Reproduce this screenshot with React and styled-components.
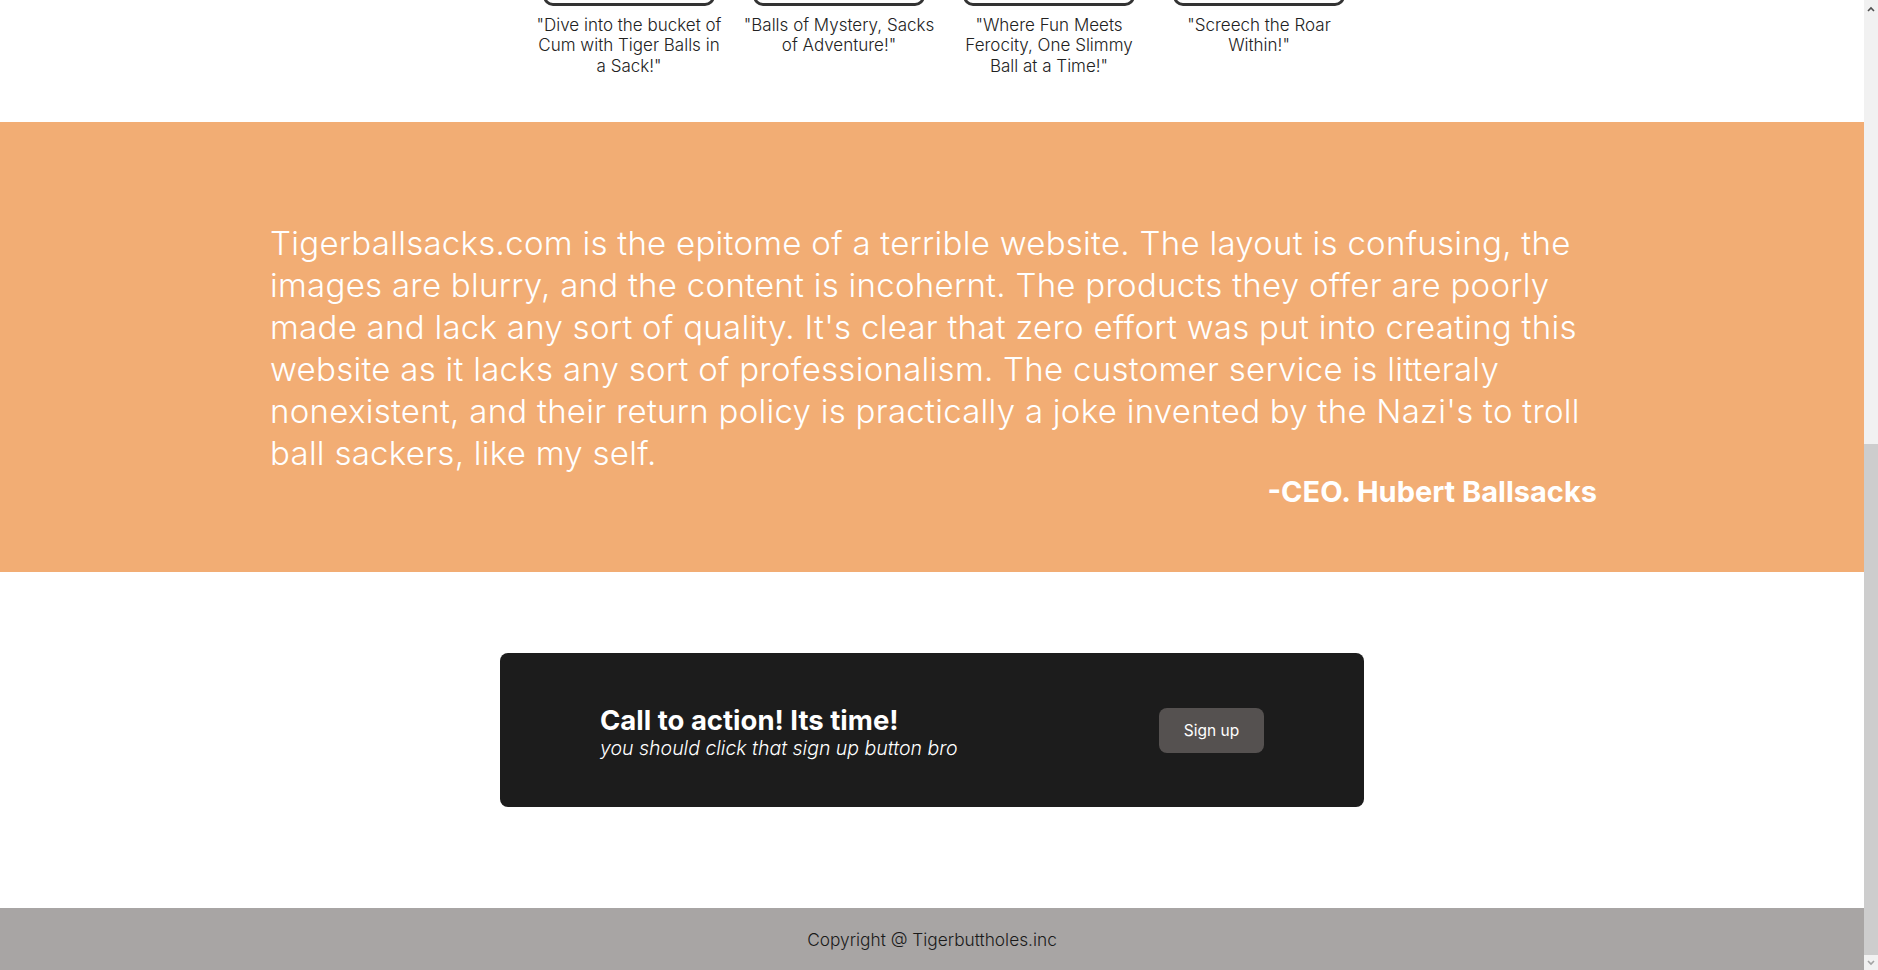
import React from 'react';
import styled, { createGlobalStyle } from 'styled-components';

const Global = createGlobalStyle`
  html, body {
    margin: 0;
    padding: 0;
    background: #fff;
  }
  body {
    font-family: Inter, Roboto, "Liberation Sans", sans-serif;
  }
`;

const Page = styled.div`
  display: flex;
  height: 100vh;
  overflow: hidden;
`;

const Main = styled.main`
  flex: 1;
  display: flex;
  flex-direction: column;
  justify-content: flex-end;
  overflow: hidden;
`;

const Cards = styled.section`
  display: flex;
  justify-content: center;
  gap: 20px;
  padding: 0 0 46px 24px;
`;

const Card = styled.div`
  width: 190px;
  display: flex;
  flex-direction: column;
  align-items: center;
`;

const CardImage = styled.div`
  width: 172px;
  height: 200px;
  box-sizing: border-box;
  border: 3px solid #333;
  border-radius: 10px;
  background: #fff;
`;

const Caption = styled.p`
  margin: 9px 0 0;
  font-size: 17px;
  line-height: 20.5px;
  font-weight: 300;
  color: #222;
  text-align: center;
  white-space: nowrap;
`;

const Review = styled.section`
  background: #f2ad74;
  padding: 100px 0 62px;
`;

const Quote = styled.div`
  width: 1327px;
  margin: 0 auto;
  padding-left: 3px;
  color: #fff;
`;

const QuoteText = styled.p`
  margin: 0;
  font-size: 33px;
  line-height: 42px;
  letter-spacing: 0.28px;
  font-weight: 300;
  white-space: nowrap;
`;

const Signature = styled.p`
  margin: 0;
  text-align: right;
  font-size: 29px;
  line-height: 36px;
  font-weight: 700;
`;

const CtaSection = styled.section`
  display: flex;
  justify-content: center;
  padding: 81px 0 101px;
`;

const CtaBox = styled.div`
  width: 864px;
  height: 154px;
  box-sizing: border-box;
  background: #1c1c1c;
  border-radius: 8px;
  padding: 0 100px;
  display: flex;
  align-items: center;
  justify-content: space-between;
  color: #fff;
`;

const CtaText = styled.div`
  padding-top: 4px;
`;

const CtaTitle = styled.h2`
  margin: 0;
  font-size: 27.5px;
  line-height: 32px;
  font-weight: 700;
`;

const CtaSub = styled.p`
  margin: 0;
  font-size: 19.5px;
  line-height: 25px;
  font-style: italic;
  font-weight: 300;
`;

const SignUp = styled.button`
  width: 105px;
  height: 45px;
  border: none;
  border-radius: 8px;
  background: #555150;
  color: #fff;
  font-family: inherit;
  font-size: 15.5px;
  font-weight: 400;
  cursor: pointer;
`;

const Footer = styled.footer`
  height: 62px;
  flex-shrink: 0;
  background: #a8a5a4;
  display: flex;
  align-items: center;
  justify-content: center;
  font-size: 17.3px;
  font-weight: 300;
  color: #1a1a1a;
`;

const Scrollbar = styled.div`
  width: 14px;
  flex-shrink: 0;
  background: #f1f1f1;
  display: flex;
  flex-direction: column;
`;

const Arrow = styled.div`
  height: ${p => p.h}px;
  display: flex;
  align-items: center;
  justify-content: center;
`;

const Track = styled.div`
  flex: 1;
  display: flex;
  flex-direction: column;
  justify-content: flex-end;
`;

const Thumb = styled.div`
  height: 511px;
  background: #cdcdcd;
`;

const captions = [
  ['"Dive into the bucket of', 'Cum with Tiger Balls in', 'a Sack!"'],
  ['"Balls of Mystery, Sacks', 'of Adventure!"'],
  ['"Where Fun Meets', 'Ferocity, One Slimmy', 'Ball at a Time!"'],
  ['"Screech the Roar', 'Within!"'],
];

const quoteLines = [
  'Tigerballsacks.com is the epitome of a terrible website. The layout is confusing, the',
  'images are blurry, and the content is incohernt. The products they offer are poorly',
  "made and lack any sort of quality. It's clear that zero effort was put into creating this",
  'website as it lacks any sort of professionalism. The customer service is litteraly',
  "nonexistent, and their return policy is practically a joke invented by the Nazi's to troll",
  'ball sackers, like my self.',
];

const Chevron = ({ up, color }) => (
  <svg width="8" height="6" viewBox="0 0 8 6">
    <polyline
      points={up ? '1,5 4,2 7,5' : '1,1 4,4 7,1'}
      fill="none"
      stroke={color}
      strokeWidth="1.6"
    />
  </svg>
);

const App = () => (
  <Page>
    <Global />
    <Main>
      <Cards>
        {captions.map((lines, i) => (
          <Card key={i}>
            <CardImage />
            <Caption>
              {lines.map((l, j) => (
                <React.Fragment key={j}>
                  {l}
                  {j < lines.length - 1 && <br />}
                </React.Fragment>
              ))}
            </Caption>
          </Card>
        ))}
      </Cards>

      <Review>
        <Quote>
          <QuoteText>
            {quoteLines.map((l, i) => (
              <React.Fragment key={i}>
                {l}
                {i < quoteLines.length - 1 && <br />}
              </React.Fragment>
            ))}
          </QuoteText>
          <Signature>-CEO. Hubert Ballsacks</Signature>
        </Quote>
      </Review>

      <CtaSection>
        <CtaBox>
          <CtaText>
            <CtaTitle>Call to action! Its time!</CtaTitle>
            <CtaSub>you should click that sign up button bro</CtaSub>
          </CtaText>
          <SignUp>Sign up</SignUp>
        </CtaBox>
      </CtaSection>

      <Footer>Copyright @ Tigerbuttholes.inc</Footer>
    </Main>
    <Scrollbar>
      <Arrow h={17}><Chevron up color="#505050" /></Arrow>
      <Track><Thumb /></Track>
      <Arrow h={15}><Chevron color="#a3a3a3" /></Arrow>
    </Scrollbar>
  </Page>
);

export default App;
